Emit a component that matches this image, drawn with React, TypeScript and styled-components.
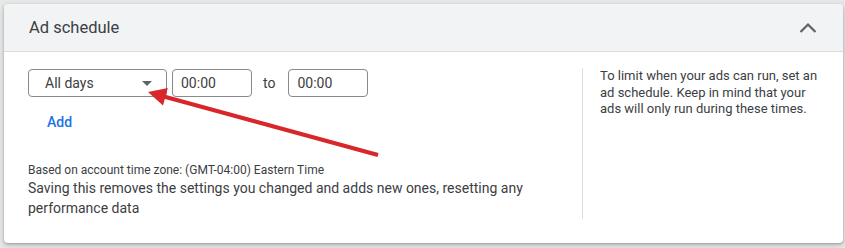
import React from "react";
import styled, { createGlobalStyle } from "styled-components";

const Global = createGlobalStyle`
  html, body { margin: 0; padding: 0; background: #e8e8e8; }
  body { font-family: Roboto, "Noto Sans", Arial, sans-serif; color: #3c4043; }
`;

const Page = styled.div`
  position: relative;
  width: 845px;
  height: 248px;
  padding: 4px 2px 0 4px;
  box-sizing: border-box;
`;

const Card = styled.section`
  width: 839px;
  height: 239px;
  background: #fff;
  border-radius: 4px;
  overflow: hidden;
  box-shadow: 0 1px 2px rgba(60, 64, 67, 0.3), 0 2px 5px 1px rgba(60, 64, 67, 0.2);
  display: flex;
  flex-direction: column;
`;

const Header = styled.header`
  flex: 0 0 48px;
  height: 48px;
  box-sizing: border-box;
  background: #f1f3f4;
  border-bottom: 1px solid #dadce0;
  display: flex;
  align-items: center;
  justify-content: space-between;
  padding: 0 23px 0 25px;
`;

const Title = styled.h2`
  margin: 0;
  font-size: 16.5px;
  font-weight: 400;
  color: #3c4043;
`;

const IconButton = styled.button`
  width: 24px;
  height: 24px;
  padding: 0;
  border: 0;
  background: none;
  display: flex;
  align-items: center;
  justify-content: center;
`;

const Body = styled.div`
  flex: 1;
  min-height: 0;
  display: flex;
  padding: 16px 24px 24px 24px;
`;

const Main = styled.div`
  flex: 1;
  padding-right: 24px;
  display: flex;
  flex-direction: column;
`;

const Divider = styled.div`
  width: 1px;
  background: #dadce0;
`;

const Aside = styled.p`
  width: 219px;
  margin: 0;
  padding-left: 17px;
  font-size: 13px;
  line-height: 16.5px;
  color: #3c4043;
`;

const Row = styled.div`
  display: flex;
  align-items: center;
  height: 28px;
  margin-top: 1px;
`;

const Field = styled.div<{ $w: number; $pl: number }>`
  width: ${(p) => p.$w}px;
  height: 28px;
  box-sizing: border-box;
  border: 1px solid #868b90;
  border-radius: 4px;
  display: flex;
  align-items: center;
  padding-left: ${(p) => p.$pl}px;
  font-size: 14px;
  color: #3c4043;
`;

const Select = styled(Field)`
  justify-content: space-between;
  padding-right: 14px;
`;

const Caret = styled.span`
  width: 0;
  height: 0;
  border-left: 5px solid transparent;
  border-right: 5px solid transparent;
  border-top: 5px solid #5f6368;
`;

const To = styled.span`
  font-size: 14px;
  margin: 0 13px 0 11px;
  color: #3c4043;
`;

const AddButton = styled.button`
  align-self: flex-start;
  margin: 15px 0 0 19px;
  padding: 0;
  border: 0;
  background: none;
  font-family: inherit;
  font-size: 14px;
  line-height: 20px;
  font-weight: 500;
  color: #1a73e8;
`;

const Zone = styled.div`
  margin-top: 30px;
  font-size: 12px;
  line-height: 16px;
  color: #3c4043;
`;

const Note = styled.div`
  font-size: 14px;
  line-height: 20px;
  color: #3c4043;
`;

const Overlay = styled.svg`
  position: absolute;
  left: 0;
  top: 0;
  pointer-events: none;
`;

export default function App() {
  return (
    <>
      <Global />
      <Page>
        <Card>
          <Header>
            <Title>Ad schedule</Title>
            <IconButton aria-label="Collapse">
              <svg width="24" height="24" viewBox="0 0 24 24">
                <polyline points="4.5,16 12,8.5 19.5,16" fill="none" stroke="#5f6368" strokeWidth="2.2" />
              </svg>
            </IconButton>
          </Header>
          <Body>
            <Main>
              <Row>
                <Select $w={139} $pl={16}>
                  <span>All days</span>
                  <Caret />
                </Select>
                <Field $w={80} $pl={8} style={{ marginLeft: 5 }}>00:00</Field>
                <To>to</To>
                <Field $w={80} $pl={8}>00:00</Field>
              </Row>
              <AddButton>Add</AddButton>
              <Zone>Based on account time zone: (GMT-04:00) Eastern Time</Zone>
              <Note>
                Saving this removes the settings you changed and adds new ones, resetting any performance data
              </Note>
            </Main>
            <Divider />
            <Aside>
              To limit when your ads can run, set an ad schedule. Keep in mind that your ads will only run during
              these times.
            </Aside>
          </Body>
        </Card>
        <Overlay width="845" height="248" viewBox="0 0 845 248">
          <line x1="378" y1="155" x2="162" y2="96" stroke="#d9262a" strokeWidth="4" />
          <polygon points="148,92 167.8,88.1 163,105.5" fill="#d9262a" />
        </Overlay>
      </Page>
    </>
  );
}
